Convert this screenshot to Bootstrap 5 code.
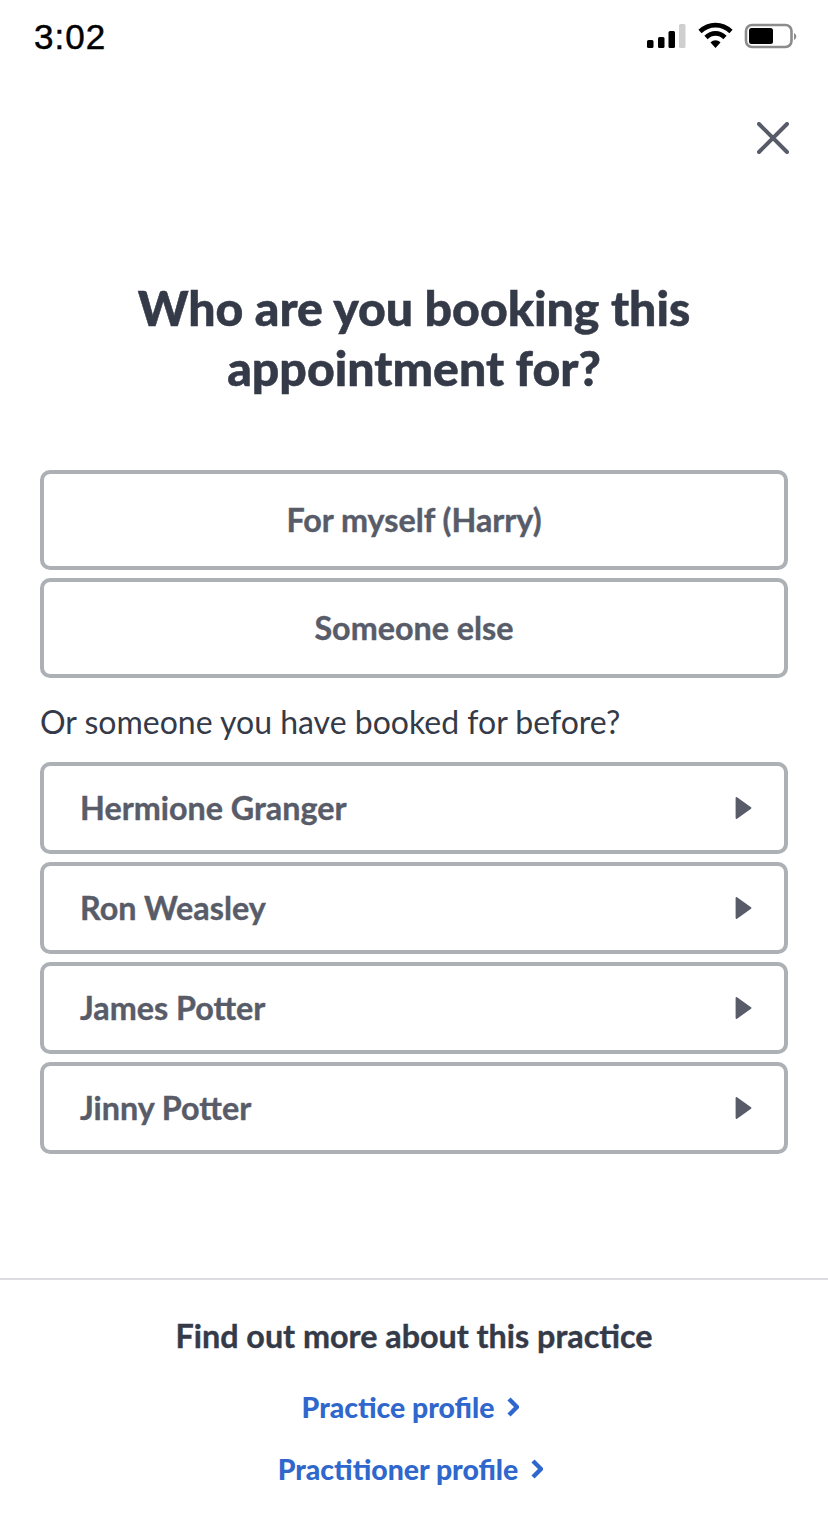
<!DOCTYPE html>
<html lang="en">
<head>
<meta charset="utf-8">
<title>Booking</title>
<link href="https://cdn.jsdelivr.net/npm/bootstrap@5.3.0/dist/css/bootstrap.min.css" rel="stylesheet">
<style>
html,body{height:1522px;}
body{font-family:Lato,sans-serif;color:#353a48;background:#fff;width:828px;overflow:hidden;}
.status-row{height:74px;padding:0 31px 2px 34px;}
.clock{font-family:"Liberation Sans",sans-serif;font-size:35px;color:#000;letter-spacing:1px;line-height:1;-webkit-text-stroke:.5px #000;}
.close-row{height:80px;padding-right:39px;}
.close-btn{width:32px;height:32px;display:block;}
.ask{font-size:48.2px;font-weight:900;line-height:60px;margin:0;padding-top:123px;color:#353a48;-webkit-text-stroke:.5px #353a48;}
.stack{padding:0 40px;margin-top:73px;}
.pick{display:block;width:100%;height:100px;border:4px solid #adb0b5;border-radius:10px;background:#fff;font-size:32.3px;font-weight:700;color:#585c69;text-align:center;padding:0;line-height:1;-webkit-text-stroke:.4px #585c69;}
.pick+.pick{margin-top:8px;}
.before{font-size:32px;line-height:36px;margin:26px 0 22px;color:#353a48;}
.person{height:92px;border:4px solid #adb0b5;border-radius:10px;background:#fff;font-size:32.3px;font-weight:700;color:#585c69;width:100%;padding:0 32px 0 36px;line-height:1;-webkit-text-stroke:.4px #585c69;}
.person+.person{margin-top:8px;}
.tail{margin-top:124px;border-top:2px solid #dcdde0;text-align:center;padding-top:37px;}
.tail-title{font-size:32.3px;font-weight:700;line-height:38px;color:#353a48;margin:0 0 34px;-webkit-text-stroke:.4px #353a48;}
.out{font-size:28.4px;font-weight:900;color:#3067cc;text-decoration:none;line-height:36px;display:flex;justify-content:center;align-items:center;gap:13px;margin-bottom:26px;padding-right:7px;}
</style>
</head>
<body>
<div class="status-row d-flex justify-content-between align-items-center">
  <span class="clock">3:02</span>
  <svg width="150" height="30" viewBox="0 0 150 30" aria-hidden="true">
    <rect x="0" y="19" width="6.5" height="8" rx="1.5" fill="#000"/>
    <rect x="11" y="16" width="6.5" height="11" rx="1.5" fill="#000"/>
    <rect x="21.5" y="10" width="6.5" height="17" rx="1.5" fill="#000"/>
    <rect x="32" y="3" width="6.5" height="24" rx="1.5" fill="#cfcfcf"/>
    <path d="M53 10.5C62 2 75 2 84 10.5" fill="none" stroke="#000" stroke-width="4.6"/>
    <path d="M59 16.5C64.5 11 72.5 11 78 16.5" fill="none" stroke="#000" stroke-width="4.6"/>
    <path d="M63.5 21.5C66.5 18.5 70.5 18.5 73.5 21.5L68.5 27Z" fill="#000"/>
    <rect x="99" y="4" width="45.5" height="22" rx="6" fill="none" stroke="#8c8c8c" stroke-width="2.6"/>
    <rect x="102" y="7" width="24" height="16" rx="2.5" fill="#000"/>
    <path d="M147 12C150 13.5 150 17.5 147 19Z" fill="#8c8c8c"/>
  </svg>
</div>
<div class="close-row d-flex justify-content-end align-items-end">
  <svg class="close-btn" viewBox="0 0 32 32" aria-label="Close"><path d="M2 2L30 30M30 2L2 30" stroke="#585c69" stroke-width="4" stroke-linecap="round"/></svg>
</div>
<h1 class="ask text-center">Who are you booking this<br>appointment for?</h1>
<div class="stack">
  <button type="button" class="pick">For myself (Harry)</button>
  <button type="button" class="pick">Someone else</button>
  <p class="before">Or someone you have booked for before?</p>
  <div class="person d-flex justify-content-between align-items-center"><span>Hermione Granger</span><svg width="17" height="24" viewBox="0 0 17 24"><path d="M1.5 2L15.5 12L1.5 22Z" fill="#585c69" stroke="#585c69" stroke-width="1.8" stroke-linejoin="round"/></svg></div>
  <div class="person d-flex justify-content-between align-items-center"><span>Ron Weasley</span><svg width="17" height="24" viewBox="0 0 17 24"><path d="M1.5 2L15.5 12L1.5 22Z" fill="#585c69" stroke="#585c69" stroke-width="1.8" stroke-linejoin="round"/></svg></div>
  <div class="person d-flex justify-content-between align-items-center"><span>James Potter</span><svg width="17" height="24" viewBox="0 0 17 24"><path d="M1.5 2L15.5 12L1.5 22Z" fill="#585c69" stroke="#585c69" stroke-width="1.8" stroke-linejoin="round"/></svg></div>
  <div class="person d-flex justify-content-between align-items-center"><span>Jinny Potter</span><svg width="17" height="24" viewBox="0 0 17 24"><path d="M1.5 2L15.5 12L1.5 22Z" fill="#585c69" stroke="#585c69" stroke-width="1.8" stroke-linejoin="round"/></svg></div>
</div>
<div class="tail">
  <p class="tail-title">Find out more about this practice</p>
  <a class="out" href="#">Practice profile <svg width="12" height="20" viewBox="0 0 12 20"><path d="M2 2L10 10L2 18" fill="none" stroke="#3067cc" stroke-width="4.4"/></svg></a>
  <a class="out" href="#">Practitioner profile <svg width="12" height="20" viewBox="0 0 12 20"><path d="M2 2L10 10L2 18" fill="none" stroke="#3067cc" stroke-width="4.4"/></svg></a>
</div>
<script src="https://cdn.jsdelivr.net/npm/bootstrap@5.3.0/dist/js/bootstrap.bundle.min.js"></script>
</body>
</html>
